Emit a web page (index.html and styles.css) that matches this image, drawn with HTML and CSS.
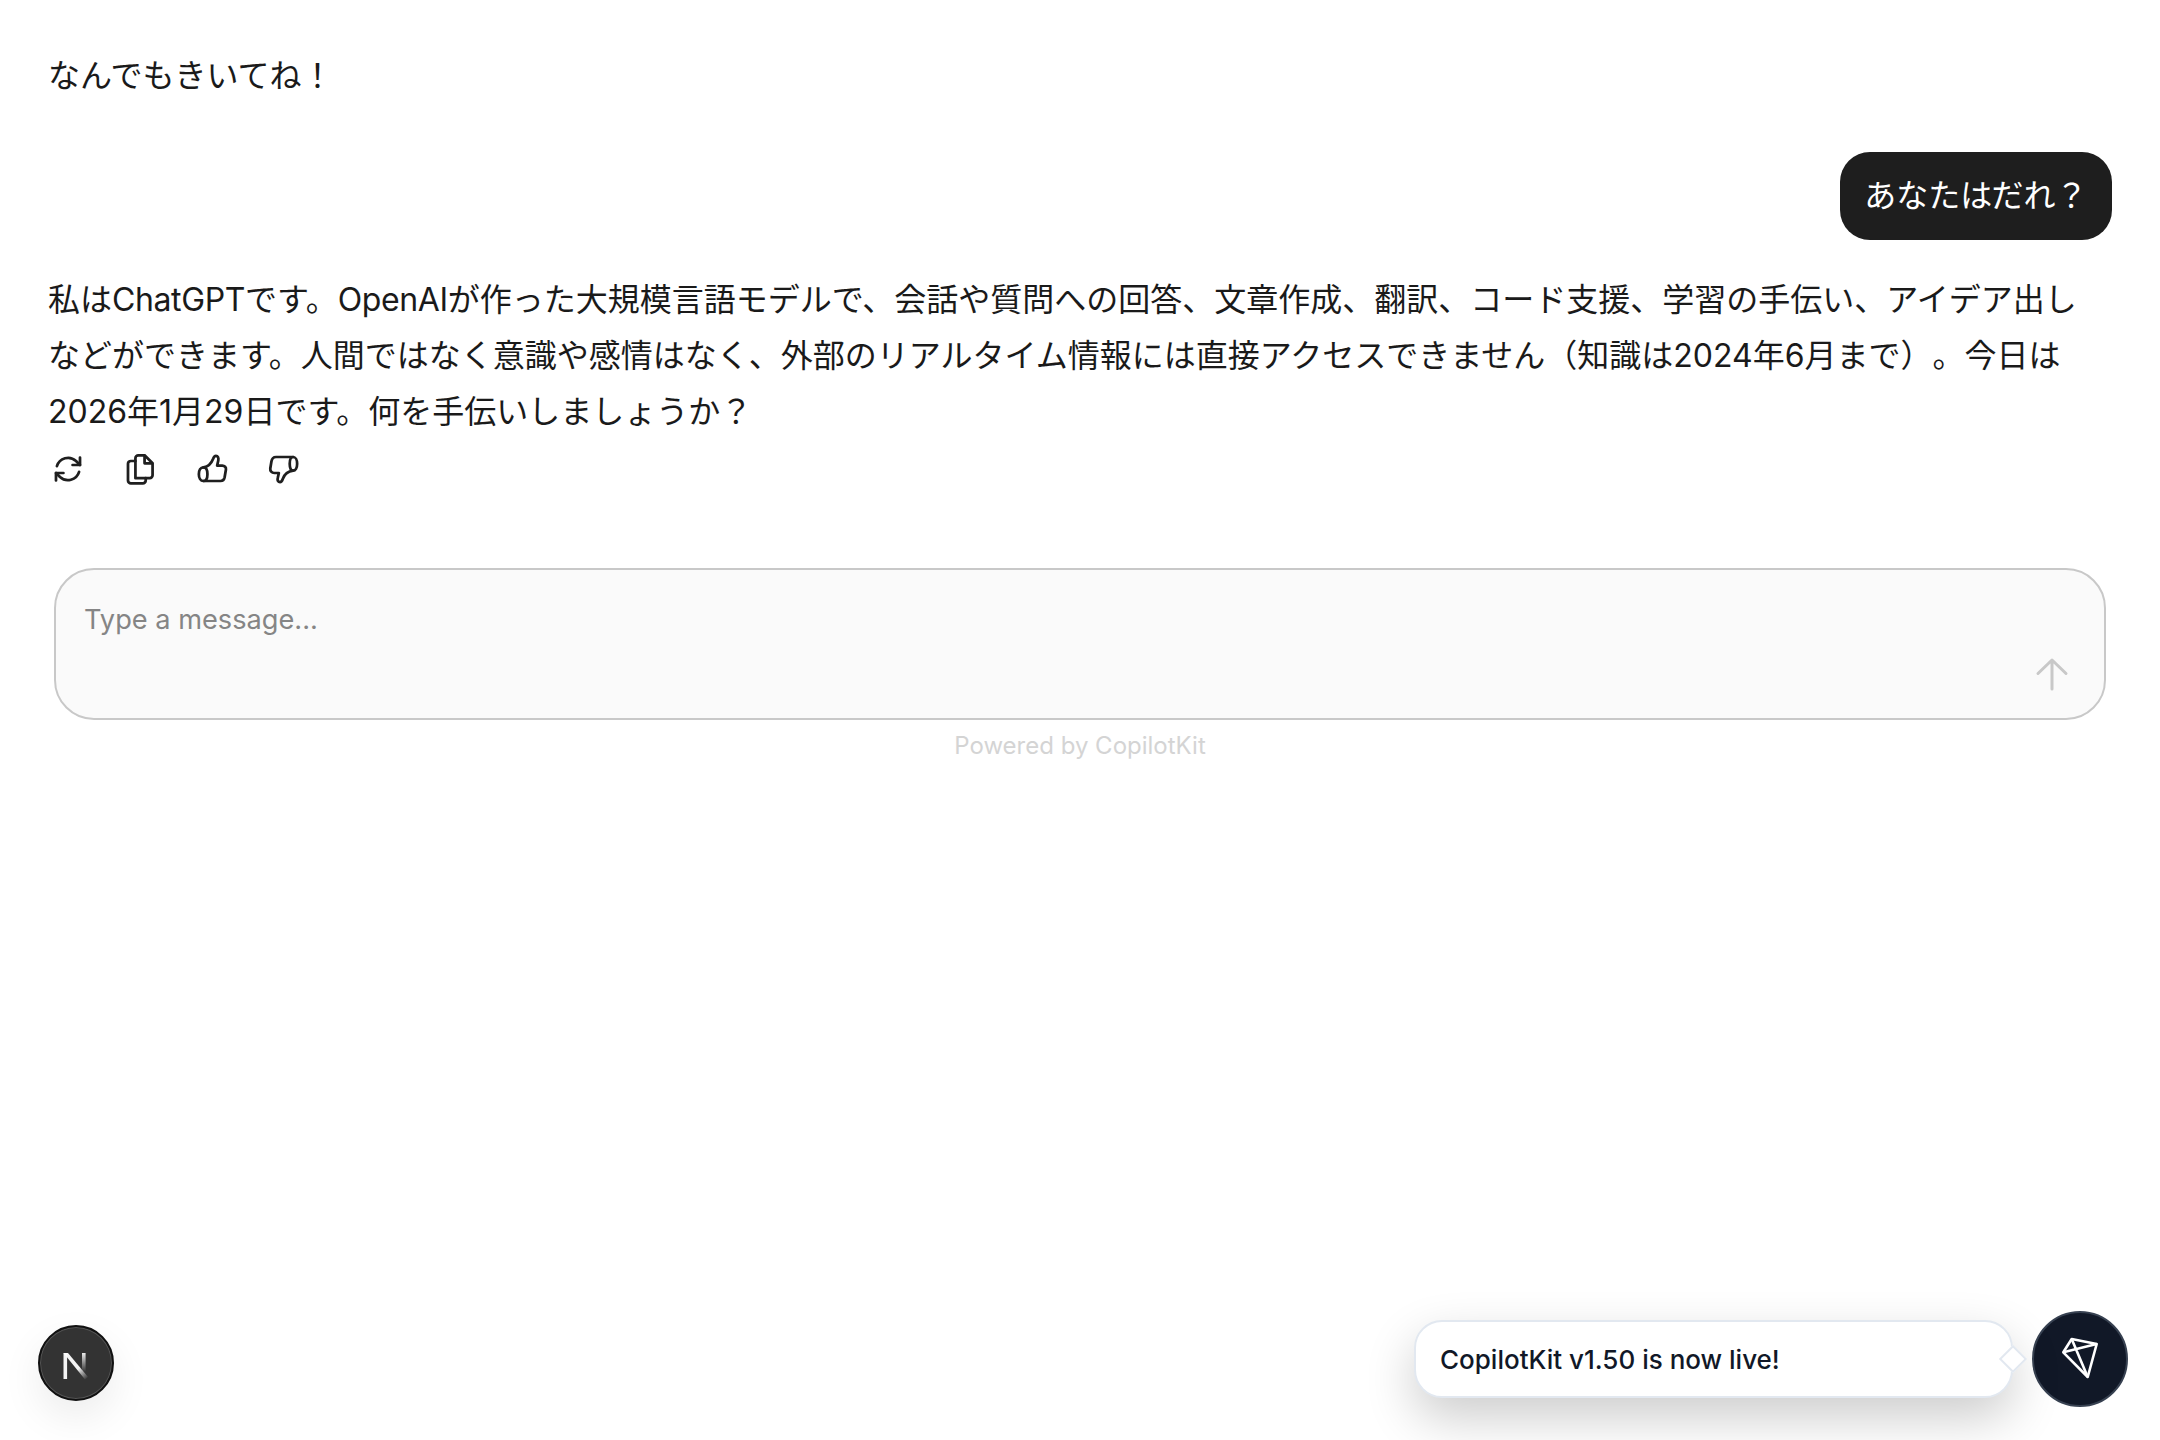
FILE: index.html
```html
<!DOCTYPE html>
<html lang="ja">
<head>
<meta charset="utf-8">
<title>Chat</title>
<link rel="stylesheet" href="styles.css">
</head>
<body>
<main class="chat">
  <div class="messages">
    <p class="assistant-text first">なんでもきいてね！</p>
    <div class="user-row"><div class="bubble">あなたはだれ？</div></div>
    <p class="assistant-text">私は<span class="latin">ChatGPT</span>です。<span class="latin">OpenAI</span>が作った大規模言語モデルで、会話や質問への回答、文章作成、翻訳、コード支援、学習の手伝い、アイデア出しなどができます。人間ではなく意識や感情はなく、外部のリアルタイム情報には直接アクセスできません（知識は2024年6月まで）。今日は2026年1月29日です。何を手伝いしましょうか？</p>
    <div class="actions">
      <button class="icon-btn" aria-label="再生成">
        <svg viewBox="0 0 28 28" class="icon"><path d="M24.500 4v6.500H18M3.500 24v-6.500H10"/><path d="M4.300 11.500A10.200 10.200 0 0 1 21 7l3.500 3.500M23.700 16.500A10.200 10.200 0 0 1 7 21l-3.500-3.500"/></svg>
      </button>
      <button class="icon-btn" aria-label="コピー">
        <svg viewBox="0 0 28 28" class="icon"><path d="M10 22V4.500A2.500 2.500 0 0 1 12.500 2H18l7 7v10.500a2.500 2.500 0 0 1-2.500 2.500Z"/><path d="M18 2.500V9h6.500"/><path d="M10 7H6A2.500 2.500 0 0 0 3.500 9.500V24A2.500 2.500 0 0 0 6 26.500h10.500A2.500 2.500 0 0 0 19 24v-2"/></svg>
      </button>
      <button class="icon-btn" aria-label="高評価">
        <svg viewBox="0 0 28 28" class="icon"><path d="M6.500 12.500C4 12.500 2.500 15 2.500 18.500s1.500 6 4 6 3.500-2.500 3.500-6-1-6-3.500-6Z"/><path d="M6.500 12.500C10 12 13.500 9 15 5c.5-1.500 1.500-2.500 2.500-2.500 1.500 0 2.500 1.500 2 4L18.500 11h4.500c2 0 3.500 1.500 3.200 3.500l-1.200 7c-.4 2-1.800 3-3.500 3H6.500"/></svg>
      </button>
      <button class="icon-btn" aria-label="低評価">
        <svg viewBox="0 0 28 28" class="icon"><path d="M22 3.500c-2 0-3 2.500-3 6s1 6 3 6 3.500-2.500 3.500-6-1.500-6-3.500-6Z"/><path d="M22 15.500c-3.500.5-7.500 3-9 7-.5 1.500-1.500 3-2.500 3-1.500 0-2.500-1.500-2-3.500l1-4.500H5.500c-2.200 0-3.800-1.800-3.500-4L3 7.500c.4-2.500 2-4 4-4h15"/></svg>
      </button>
    </div>
  </div>
  <div class="composer">
    <span class="placeholder">Type a message...</span>
    <svg viewBox="0 0 34 34" class="send"><path d="M17 32V3M3 16.500 17 3l14 13.500"/></svg>
  </div>
  <div class="powered">Powered by CopilotKit</div>
</main>

<button class="dev-badge" aria-label="Next.js">
  <svg viewBox="0 0 50 50" class="dev-logo">
    <defs>
      <linearGradient id="nfade" gradientUnits="userSpaceOnUse" x1="0" y1="13" x2="0" y2="32"><stop offset="0" stop-color="#fff" stop-opacity="0.9"/><stop offset="1" stop-color="#fff" stop-opacity="0"/></linearGradient>
      <linearGradient id="dfade" gradientUnits="userSpaceOnUse" x1="22" y1="22" x2="37" y2="39"><stop offset="0.4" stop-color="#fff" stop-opacity="0.95"/><stop offset="1" stop-color="#fff" stop-opacity="0"/></linearGradient>
    </defs>
    <rect x="13.500" y="13" width="3.600" height="26" fill="#f4f4f4"/>
    <rect x="32" y="13" width="3.600" height="20" fill="url(#nfade)"/>
    <polygon points="13.500,13 18,13 38,37 35,39.500" fill="url(#dfade)"/>
  </svg>
</button>

<aside class="notice">
  <div class="notice-card">CopilotKit v1.50 is now live!<span class="notice-tip"></span></div>
  <button class="kit-btn" aria-label="CopilotKit">
    <svg viewBox="0 0 60 60" class="kit-logo"><path d="M21.700 10 46.700 15 37.700 48 13.300 23.300Z"/><path d="M21.700 10 37.700 48M13.300 23.300 46.700 15"/></svg>
  </button>
</aside>
</body>
</html>
```
FILE: styles.css
```css
* { box-sizing: border-box; }

html, body {
  margin: 0;
  height: 100%;
  background: #fff;
}

body {
  position: relative;
  height: 1440px;
  overflow: hidden;
  font-family: Inter, "Noto Sans CJK JP", sans-serif;
  color: #1a1a1a;
  text-spacing-trim: space-all;
}

.chat {
  display: flex;
  flex-direction: column;
  padding: 48px 48px 0;
}

.messages {
  display: flex;
  flex-direction: column;
}

.assistant-text {
  margin: 0;
  max-width: 2050px;
  font-size: 32px;
  line-height: 56px;
}

.latin {
  letter-spacing: -0.4px;
}

.user-row {
  display: flex;
  justify-content: flex-end;
  margin-top: 48px;
  margin-bottom: 32px;
}

.bubble {
  background: #1e1e1e;
  color: #fff;
  font-size: 32px;
  line-height: 56px;
  padding: 16px 24.500px;
  border-radius: 30px;
}

.actions {
  display: flex;
  gap: 32px;
  margin-top: 9px;
}

.icon-btn {
  width: 40px;
  height: 40px;
  padding: 0;
  border: 0;
  background: none;
  display: flex;
  align-items: center;
  justify-content: center;
}

.icon {
  width: 32px;
  height: 32px;
  fill: none;
  stroke: #1f1f1f;
  stroke-width: 2.400;
  stroke-linecap: round;
  stroke-linejoin: round;
}

.composer {
  position: relative;
  margin: 79px 6px 0;
  height: 152px;
  background: #fafafa;
  border: 2px solid #c8c8c8;
  border-radius: 40px;
  padding: 30px 28px;
}

.placeholder {
  font-size: 27.200px;
  line-height: 40px;
  color: #858585;
  display: block;
}

.send {
  position: absolute;
  right: 35px;
  bottom: 27px;
  width: 34px;
  height: 34px;
  fill: none;
  stroke: #c8c8c8;
  stroke-width: 3;
  stroke-linecap: round;
  stroke-linejoin: round;
}

.powered {
  margin-top: 10px;
  text-align: center;
  font-size: 24px;
  line-height: 32px;
  color: #d4d4d4;
}

.dev-badge {
  position: absolute;
  left: 38px;
  top: 1325px;
  width: 76px;
  height: 76px;
  padding: 0;
  border-radius: 50%;
  border: 2px solid #111;
  background: #333;
  box-shadow: 0 0 0 1px #555 inset, 0 16px 40px rgba(0, 0, 0, 0.08);
  display: flex;
  align-items: center;
  justify-content: center;
}

.dev-logo {
  width: 50px;
  height: 50px;
  flex: none;
  margin-right: 2px;
  margin-top: 4px;
}

.notice {
  position: absolute;
  left: 1414px;
  top: 1311px;
  display: flex;
  align-items: center;
  gap: 19px;
}

.notice-card {
  position: relative;
  width: 599px;
  height: 78px;
  display: flex;
  align-items: center;
  padding-left: 24px;
  background: #fff;
  border: 2px solid #e2e8f0;
  border-radius: 28px;
  font-size: 26px;
  font-weight: 500;
  color: #111827;
  box-shadow: 0 20px 50px rgba(0, 0, 0, 0.2);
}

.notice-tip {
  position: absolute;
  right: -12px;
  top: 50%;
  width: 20px;
  height: 20px;
  margin-top: -10px;
  background: #fff;
  border: 2px solid #e2e8f0;
  transform: rotate(45deg);
}

.kit-btn {
  width: 96px;
  height: 96px;
  padding: 0;
  border-radius: 50%;
  border: 2px solid #374151;
  background: #111827;
  display: flex;
  align-items: center;
  justify-content: center;
}

.kit-logo {
  width: 60px;
  height: 60px;
  flex: none;
  fill: none;
  stroke: #fff;
  stroke-width: 2.600;
  stroke-linejoin: round;
}
```
